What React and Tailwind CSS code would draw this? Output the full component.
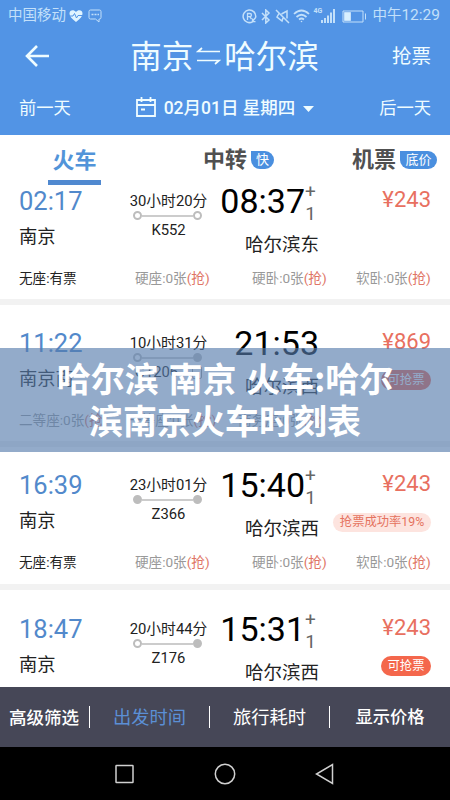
import React from 'react';
import clsx from 'clsx';

const trains = [
    {
        id: 1,
        depart: '02:17',
        from: '南京',
        duration: '30小时20分',
        number: 'K552',
        fromEnd: false,
        toEnd: false,
        arrive: '08:37',
        nextDay: true,
        to: '哈尔滨东',
        price: 243,
        seats: ['无座', '硬座', '硬卧', '软卧'],
        hasTicket: true,
        box: 'h-[114px] pt-[3px]',
    },
    {
        id: 2,
        depart: '11:22',
        from: '南京南',
        duration: '10小时31分',
        number: 'G1206',
        idCard: true,
        fromEnd: false,
        toEnd: true,
        arrive: '21:53',
        nextDay: false,
        to: '哈尔滨西',
        price: 869,
        tag: 'grab',
        seats: ['二等座', '一等座', '商务座'],
        hasTicket: false,
        box: 'h-[136px] pt-[25px]',
    },
    {
        id: 3,
        depart: '16:39',
        from: '南京',
        duration: '23小时01分',
        number: 'Z366',
        fromEnd: true,
        toEnd: true,
        arrive: '15:40',
        nextDay: true,
        to: '哈尔滨西',
        price: 243,
        tag: 'rate',
        seats: ['无座', '硬座', '硬卧', '软卧'],
        hasTicket: true,
        box: 'h-[137px] pt-[25px]',
    },
    {
        id: 4,
        depart: '18:47',
        from: '南京',
        duration: '20小时44分',
        number: 'Z176',
        fromEnd: false,
        toEnd: true,
        arrive: '15:31',
        nextDay: true,
        to: '哈尔滨西',
        price: 243,
        tag: 'grab',
        seats: [],
        box: 'h-[97px] pt-[26px]',
    },
];

const StatusBar = () => (
    <div className="flex h-8 items-center justify-between pl-2 pr-[10px] text-[#c3e0fa]">
        <div className="flex items-center">
            <span className="text-[14.5px]">中国移动</span>
            <svg className="ml-[3px] h-[14px] w-[14px]" viewBox="0 0 14 14">
                <path d="M7 13C3 9.8.5 7.500.5 4.500.5 1 4.800.2 7 3c2.200-2.800 6.500-2 6.500 1.500C13.500 7.500 11 9.800 7 13Z" fill="#e0f4ff" />
                <path d="M0 7h4l1.500-2.500L7.500 9 9 6.500h5" fill="none" stroke="#5294e5" strokeWidth="1" />
            </svg>
            <svg className="ml-[5px] h-[14px] w-[14px]" viewBox="0 0 14 14" fill="none" stroke="currentColor">
                <path d="M2.500 1h9Q13 1 13 2.500v6Q13 10 11.500 10H11v3l-3.500-3h-5Q1 10 1 8.500v-6Q1 1 2.500 1Z" />
                <path d="M3.500 5.500h2m1 0h2m1 0h1.500" strokeWidth="1.500" />
            </svg>
        </div>
        <div className="flex items-center">
            <svg className="h-[15px] w-[15px]" viewBox="0 0 15 15" fill="none" stroke="currentColor">
                <path d="M10.500 12.800A6.300 6.300 0 1 1 13.700 8" strokeWidth="1.500" />
                <path d="M5.500 11V4.500h2.300q1.700 0 1.700 1.600T7.800 7.700H5.500M8 8l1.500 2M14 8l-3.500 4.500M10.500 9.500v3.200h3" strokeWidth="1.300" />
            </svg>
            <svg className="ml-1 h-[15px] w-[10px]" viewBox="0 0 10 15" fill="none" stroke="currentColor" strokeWidth="1.500">
                <path d="m1 4 7 7-3.200 3V1L8 4l-7 7" />
            </svg>
            <svg className="ml-1 h-[15px] w-[15px]" viewBox="0 0 15 15" fill="none" stroke="currentColor" strokeWidth="1.500">
                <path d="M1 1l13 13M4 4.500 2 8l5 4 1-3M6.500 5 12 2v7.500" />
            </svg>
            <svg className="ml-[3px] h-[14px] w-[17px]" viewBox="0 0 17 14" fill="none" stroke="currentColor" strokeWidth="1.700">
                <path d="M1 5q7.500-7 15 0M3.500 8q5-4.500 10 0M6 10.500q2.500-2 5 0" />
                <circle cx="8.500" cy="12.500" r=".8" fill="currentColor" stroke="none" />
            </svg>
            <span className="mb-[9px] ml-[3px] w-[9px] text-[7px] font-bold leading-none">4G</span>
            <svg className="-ml-px h-[14px] w-[14px]" viewBox="0 0 14 14" fill="currentColor">
                <path d="M0 11h2v3H0zM3 9h2v5H3zM6 6.500h2V14H6zM9 3.500h2V14H9zM12 0h2v14h-2z" />
            </svg>
            <svg className="ml-[7px] h-[13px] w-[25px]" viewBox="0 0 25 13" fill="none" stroke="currentColor">
                <path d="M1 1h20v11H1zM23.500 3.500v6" />
                <path d="M2.500 2.500h6v8h-6z" fill="#d8f0ff" />
            </svg>
            <span className="ml-[5px] text-[14.5px]">中午</span>
            <span className="text-[15.5px]">12:29</span>
        </div>
    </div>
);

const Header = () => (
    <header className="h-[135px] bg-[#5294e5] text-[#effcff]">
        <StatusBar />
        <div className="flex h-[48px] items-center justify-between pl-[25px] pr-[19px]">
            <svg className="-mt-px h-[22px] w-[25px]" viewBox="0 0 25 22" fill="none" stroke="currentColor" strokeWidth="2.600">
                <path d="M24 11H2M12 1 2 11l10 10" />
            </svg>
            <h1 className="ml-[7px] mt-[3px] flex items-center text-[31.5px]">
                <span>南京</span>
                <svg className="mx-[3px] -mt-1 h-[18px] w-[25px]" viewBox="0 0 25 18" fill="none" stroke="currentColor" strokeWidth="1.700">
                    <path d="M24 4.500H2l4-3.500M1 13.500h22l-4 3.500" />
                </svg>
                <span>哈尔滨</span>
            </h1>
            <span className="mt-[2px] text-[19.5px]">抢票</span>
        </div>
        <div className="flex h-[55px] items-start justify-between pl-[19px] pr-[19px] pt-[15px]">
            <span className="text-[17.3px] leading-[27px]">前一天</span>
            <div className="flex items-center">
                <svg className="-mt-[3px] h-[20px] w-[20px]" viewBox="0 0 20 20" fill="none" stroke="currentColor" strokeWidth="1.800">
                    <path d="M1 3h18v16H1zM1 8h18M5.500 0v5M14.500 0v5M5 12.500h4" />
                </svg>
                <span className="ml-2 text-[17.5px] font-medium leading-[27px]">02月01日 星期四</span>
                <svg className="ml-[8px] h-[6px] w-[11px]" viewBox="0 0 11 6" fill="currentColor">
                    <path d="M0 0h11L5.500 6z" />
                </svg>
            </div>
            <span className="text-[17.3px] leading-[27px]">后一天</span>
        </div>
    </header>
);

const Tabs = () => (
    <div className="flex h-[50px] bg-white text-[22px] font-bold leading-[52px] text-[#505050]">
        <div className="ml-12 h-[50px] w-[53px] border-b-[5px] border-[#5089d0] text-center text-[#5294d9]">火车</div>
        <div className="ml-[102px] flex w-[71px] items-center">
            中转
            <span className="ml-[4px] h-[18px] w-[23px] rounded-[9px] rounded-tl-none bg-[#4a8fdf] text-center text-[13px] font-normal leading-[18px] text-white">快</span>
        </div>
        <div className="ml-[78px] flex items-center">
            机票
            <span className="ml-[4px] h-[18px] w-[37px] rounded-[9px] rounded-tl-none bg-[#4a8fdf] text-center text-[13px] font-normal leading-[18px] text-white">底价</span>
        </div>
    </div>
);

const Dot = ({ filled }) => (
    <span className={clsx('h-[9px] w-[9px] rounded-full border-2 border-[#bdbdbd]', filled ? 'bg-[#bdbdbd]' : 'bg-white')} />
);

const TrainCard = ({ train }) => (
    <div className={clsx('bg-white pl-[19px] pr-[19px] text-[#222]', train.box)}>
        <div className="flex h-[65px]">
            <div className="w-[111px]">
                <p className="text-[25.5px] leading-[26px] text-[#5289cb]">{train.depart}</p>
                <p className="mt-[10px] text-[18.3px] leading-[26px]">{train.from}</p>
            </div>
            <div className="-ml-px mr-px flex w-[79px] flex-col items-center whitespace-nowrap">
                <p className="text-[14.8px] leading-[26px]">{train.duration}</p>
                <div className="-mt-[3px] mr-[2px] flex h-[9px] w-[69px] items-center">
                    <Dot filled={train.fromEnd} />
                    <span className="h-[2px] flex-1 bg-[#ccc]" />
                    <Dot filled={train.toEnd} />
                </div>
                <p className="flex items-center text-[14.8px] leading-[20px]">
                    {train.number}
                    {train.idCard && <span className="ml-[14px] h-[13px] w-[10px] rounded-[2px] border border-[#999]" />}
                </p>
            </div>
            <div className="flex w-[110px] flex-col items-end">
                <div className="flex h-[26px] items-center">
                    <span className="text-[34px] leading-[26px] text-black">{train.arrive}</span>
                    {train.nextDay && (
                        <span className="mr-[3px] mt-[3px] flex w-[11px] flex-col items-center text-[19px] leading-[22px] text-[#666]">
                            <span>+</span>
                            <span>1</span>
                        </span>
                    )}
                </div>
                <p className="mt-[18px] text-[18.5px] leading-[26px]">{train.to}</p>
            </div>
            <div className="flex flex-1 flex-col items-end whitespace-nowrap">
                <p className="text-[22px] leading-[23px] text-[#e87060]">¥{train.price}</p>
                {train.tag === 'grab' && (
                    <span className="mt-[17px] h-5 w-[50px] rounded-full bg-[#f4674c] text-center text-[12.3px] leading-5 text-white">可抢票</span>
                )}
                {train.tag === 'rate' && (
                    <span className="mt-[18px] h-[19px] w-[98px] rounded-full bg-[#fde4df] text-center text-[12.3px] leading-[19px] text-[#e57360]">抢票成功率19%</span>
                )}
            </div>
        </div>
        {train.seats.length > 0 && (
            <div
                className={clsx(
                    'mt-[15px] grid whitespace-nowrap text-[13.6px] leading-[20px] text-[#999]',
                    train.hasTicket ? 'grid-cols-[116px_117px_104px_75px]' : 'grid-cols-[109px_110px_90px]'
                )}
            >
                {train.seats.map((seat, index) =>
                    index === 0 && train.hasTicket ? (
                        <span key={seat} className="text-[#222]">{seat}:有票</span>
                    ) : (
                        <span key={seat}>
                            {seat}:0张<span className="text-[#e07565]">(抢)</span>
                        </span>
                    )
                )}
            </div>
        )}
    </div>
);

const FilterBar = () => (
    <div className="flex h-[60px] items-center bg-[#464757] pt-[2px] text-white">
        <span className="w-[89px] pl-[9px] text-[17.5px] font-medium">高级筛选</span>
        <span className="mb-[2px] h-[22px] w-px bg-white" />
        <span className="w-[119px] text-center text-[18.3px] text-[#5b8fd5]">出发时间</span>
        <span className="mb-[2px] h-[22px] w-px bg-white" />
        <span className="w-[119px] text-center text-[18.3px]">旅行耗时</span>
        <span className="mb-[2px] h-[22px] w-px bg-white" />
        <span className="flex-1 text-center text-[17.3px] font-medium">显示价格</span>
    </div>
);

const NavBar = () => (
    <div className="flex h-[53px] items-center bg-black pl-[115px] text-[#d0d0d0]">
        <svg className="h-5 w-[19px]" viewBox="0 0 19 20" fill="none" stroke="currentColor" strokeWidth="1.500">
            <rect x="1" y="1.500" width="17" height="17" rx=".5" />
        </svg>
        <svg className="ml-20 h-[22px] w-[22px]" viewBox="0 0 22 22" fill="none" stroke="currentColor" strokeWidth="1.500">
            <circle cx="11" cy="11" r="9.700" />
        </svg>
        <svg className="ml-[79px] h-[22px] w-[19px]" viewBox="0 0 19 22" fill="none" stroke="currentColor" strokeWidth="1.500">
            <path d="M17.500 1.500v19L1.500 11z" />
        </svg>
    </div>
);

const App = () => {
    return (
        <div className="relative h-[800px] w-[450px] overflow-hidden bg-white font-['Roboto','Noto_Sans_CJK_SC',sans-serif]">
            <Header />
            <Tabs />
            <div className="flex flex-col gap-[6px] bg-[#f2f2f2]">
                {trains.map((train) => (
                    <TrainCard key={train.id} train={train} />
                ))}
            </div>
            <FilterBar />
            <NavBar />

            {/* 标题横幅 */}
            <div className="absolute left-0 top-[348px] h-[104px] w-full bg-[rgba(86,123,172,0.64)] pt-[9px] text-center font-['Noto_Sans_CJK_SC',sans-serif] text-[34px] font-bold leading-[42px] text-white [word-spacing:2px]">
                <p>哈尔滨 南京 火车:哈尔</p>
                <p>滨南京火车时刻表</p>
            </div>
        </div>
    );
};

export default App;
